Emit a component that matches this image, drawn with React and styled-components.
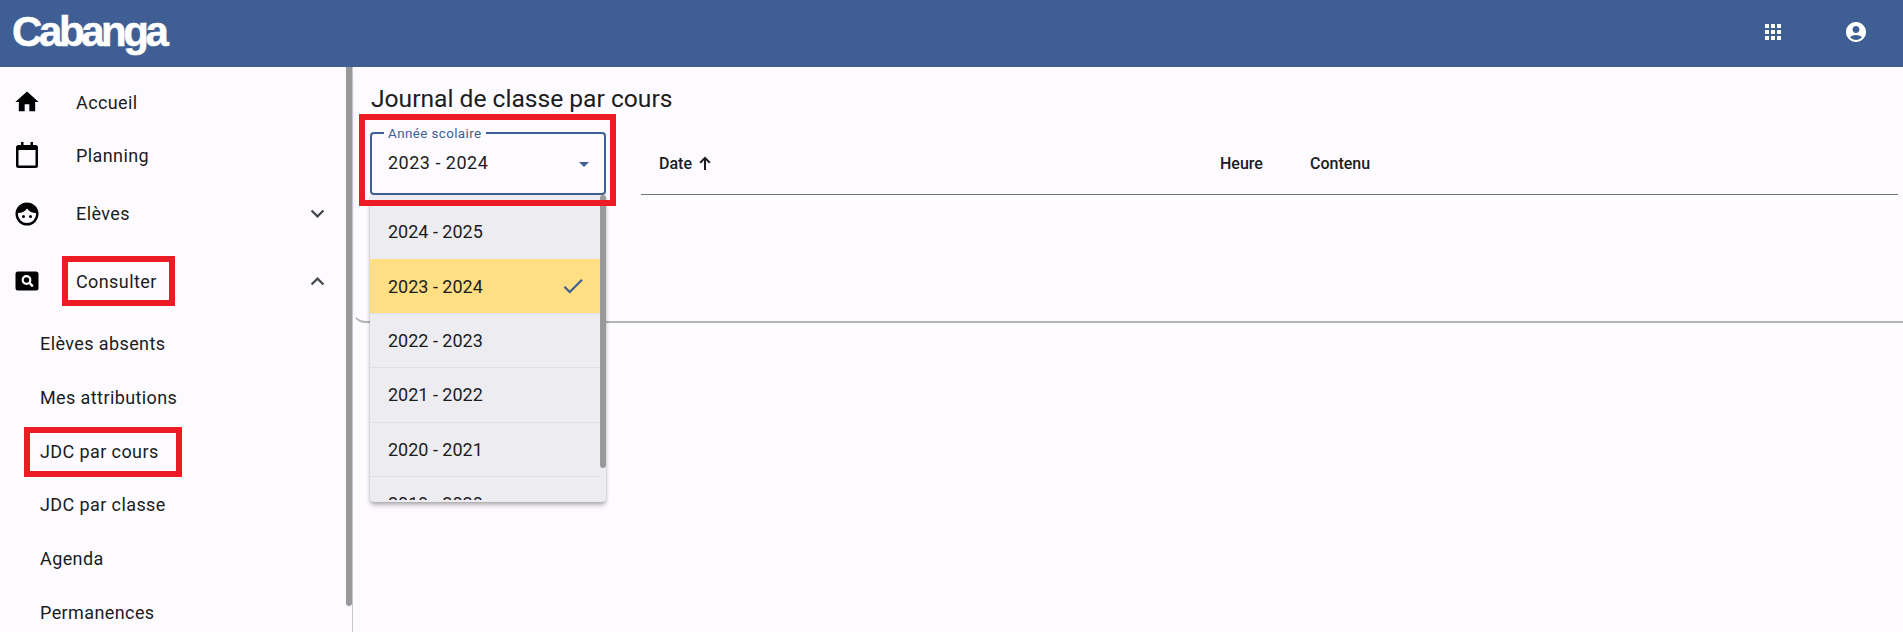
import React from "react";
import styled, { createGlobalStyle } from "styled-components";
import {
  MdHome,
  MdExpandMore,
  MdExpandLess,
  MdApps,
  MdAccountCircle,
  MdArrowDropDown,
  MdCheck,
} from "react-icons/md";

const years = ["2024 - 2025", "2023 - 2024", "2022 - 2023", "2021 - 2022", "2020 - 2021", "2019 - 2020"];
const subLinks = ["Elèves absents", "Mes attributions", "JDC par cours", "JDC par classe", "Agenda", "Permanences"];

function CalendarIcon() {
  return (
    <svg width="24" height="26" viewBox="0 0 24 26">
      <path d="M6 0h2.500v3h7V0H18v3h2.500A2.500 2.500 0 0 1 23 5.500v18a2.500 2.500 0 0 1-2.500 2.500h-17A2.500 2.500 0 0 1 1 23.500v-18A2.500 2.500 0 0 1 3.500 3H6z" fill="#000" />
      <rect x="3.500" y="8" width="17" height="15.500" fill="#fdfbff" />
    </svg>
  );
}

function FaceIcon() {
  return (
    <svg width="24" height="24" viewBox="0 0 24 24">
      <circle cx="12" cy="12" r="10.300" fill="none" stroke="#000" strokeWidth="2.400" />
      <path d="M3 11c3.500 0 7-1.500 9-4.500 2 3 5.500 4.500 9 4.500V6l-4-4H7L3 6z" fill="#000" />
      <circle cx="8.500" cy="14.500" r="1.500" fill="#000" />
      <circle cx="15.500" cy="14.500" r="1.500" fill="#000" />
    </svg>
  );
}

function SearchCardIcon() {
  return (
    <svg width="24" height="24" viewBox="0 0 24 24">
      <rect x="0.500" y="2.500" width="23" height="19" rx="2.500" fill="#000" />
      <circle cx="11.500" cy="11" r="3.800" fill="none" stroke="#fff" strokeWidth="2.200" />
      <path d="M14.200 13.700l3.600 3.600" stroke="#fff" strokeWidth="2.400" />
    </svg>
  );
}

function SortArrow() {
  return (
    <svg width="18" height="18" viewBox="0 0 18 18">
      <path d="M9 2.500L3.500 8l1.400 1.400L8 6.300V16h2V6.300l3.100 3.100L14.500 8z" fill="currentColor" />
    </svg>
  );
}

function App() {
  return (
    <>
      <GlobalStyle />
      <Page>
        <Toolbar>
          <Logo>Cabanga</Logo>
          <ToolbarIcons>
            <MdApps size={24} />
            <MdAccountCircle size={24} />
          </ToolbarIcons>
        </Toolbar>
        <Body>
          <Sidebar>
            <NavRow $height={52}>
              <NavIcon><MdHome size={28} /></NavIcon>
              <NavLabel>Accueil</NavLabel>
            </NavRow>
            <NavRow $height={54}>
              <NavIcon><CalendarIcon /></NavIcon>
              <NavLabel>Planning</NavLabel>
            </NavRow>
            <NavRow $height={63}>
              <NavIcon><FaceIcon /></NavIcon>
              <NavLabel>Elèves</NavLabel>
              <Chevron><MdExpandMore size={27} /></Chevron>
            </NavRow>
            <NavRow $height={72}>
              <NavIcon><SearchCardIcon /></NavIcon>
              <NavLabel>Consulter</NavLabel>
              <Chevron><MdExpandLess size={27} /></Chevron>
            </NavRow>
            {subLinks.map((link) => (
              <SubLink key={link}>{link}</SubLink>
            ))}
            <SideThumb />
            <Highlight $left={62} $top={189} $width={113} $height={50} />
            <Highlight $left={24} $top={360} $width={158} $height={50} />
          </Sidebar>
          <Main>
            <Card>
              <Title>Journal de classe par cours</Title>
              <CardRow>
                <SelectField>
                  <FieldLabel>Année scolaire</FieldLabel>
                  <FieldValue>2023 - 2024</FieldValue>
                  <ArrowSlot><MdArrowDropDown size={24} /></ArrowSlot>
                  <Highlight $left={-13} $top={-20} $width={257} $height={92} />
                  <Panel>
                    <PanelList>
                      {years.map((year, i) => (
                        <Option key={year} $selected={i === 1} $plain={i < 1}>
                          {year}
                          {i === 1 && <MdCheck size={26} />}
                        </Option>
                      ))}
                    </PanelList>
                    <PanelThumb />
                  </Panel>
                </SelectField>
                <Table>
                  <DateHead>Date <SortArrow /></DateHead>
                  <HourHead>Heure</HourHead>
                  <ContentHead>Contenu</ContentHead>
                </Table>
              </CardRow>
            </Card>
          </Main>
        </Body>
      </Page>
    </>
  );
}

const GlobalStyle = createGlobalStyle`
  html, body {
    margin: 0;
    height: 100%;
    overflow: hidden;
    background: #fdfbff;
    font-family: Roboto, "Liberation Sans", sans-serif;
    color: #1a1c1e;
  }
`;

const Page = styled.div`
  display: flex;
  flex-direction: column;
  width: 1903px;
  height: 632px;
  overflow: hidden;
`;

const Toolbar = styled.header`
  display: flex;
  align-items: center;
  justify-content: space-between;
  flex: 0 0 67px;
  padding: 0 35px 4px 12px;
  box-sizing: border-box;
  background: #3f5f94;
  color: #fff;
`;

const Logo = styled.div`
  font-family: "Liberation Sans", Arial, sans-serif;
  font-weight: 700;
  font-size: 42px;
  letter-spacing: -3.400px;
  -webkit-text-stroke: 0.5px #fff;
`;

const ToolbarIcons = styled.div`
  display: flex;
  align-items: center;
  gap: 59px;
`;

const Body = styled.div`
  display: flex;
  flex: 1;
  min-height: 0;
`;

const Sidebar = styled.nav`
  position: relative;
  flex: 0 0 353px;
  box-sizing: border-box;
  padding-top: 9px;
  border-right: 1px solid #c4c6cf;
`;

const NavRow = styled.div`
  display: flex;
  align-items: center;
  height: ${(p) => p.$height}px;
  padding: 0 21px 0 13px;
`;

const NavIcon = styled.span`
  display: flex;
  justify-content: center;
  width: 28px;
  margin-right: 35px;
  color: #000;
`;

const NavLabel = styled.span`
  flex: 1;
  font-size: 18px;
  letter-spacing: 0.4px;
`;

const Chevron = styled.span`
  display: flex;
  color: #43474e;
`;

const SubLink = styled.div`
  display: flex;
  align-items: center;
  height: 53.700px;
  padding-left: 40px;
  font-size: 18px;
  letter-spacing: 0.4px;
`;

const SideThumb = styled.div`
  position: absolute;
  top: 0;
  right: 0;
  width: 6px;
  height: 539px;
  border-radius: 0 0 3px 3px;
  background: #999;
`;

const Highlight = styled.div`
  position: absolute;
  left: ${(p) => p.$left}px;
  top: ${(p) => p.$top}px;
  width: ${(p) => p.$width}px;
  height: ${(p) => p.$height}px;
  box-sizing: border-box;
  border: 6px solid #ed1c24;
  pointer-events: none;
  z-index: 5;
`;

const Main = styled.main`
  flex: 1;
  min-width: 0;
`;

const Card = styled.section`
  box-sizing: border-box;
  height: 256px;
  padding: 16px 5px 0 16px;
  border-bottom: 2px solid #b4b4b8;
  border-left: 1px solid #f3f2f6;
  border-radius: 12px 0 0 12px;
`;

const Title = styled.h1`
  margin: 0 0 0 1px;
  height: 49px;
  font-size: 24.600px;
  line-height: 32px;
  font-weight: 400;
`;

const CardRow = styled.div`
  display: flex;
  align-items: flex-start;
`;

const SelectField = styled.div`
  position: relative;
  flex: 0 0 236px;
  box-sizing: border-box;
  height: 63px;
  padding: 17px 15px 0 16px;
  border: 2px solid #3f5f94;
  border-radius: 4px;
`;

const FieldLabel = styled.span`
  position: absolute;
  top: -8px;
  left: 12px;
  padding: 0 4px;
  background: #fdfbff;
  font-size: 13.400px;
  line-height: 16px;
  letter-spacing: 0.4px;
  color: #3f5f94;
`;

const FieldValue = styled.div`
  font-size: 18px;
  line-height: 24px;
  letter-spacing: 0.5px;
`;

const ArrowSlot = styled.span`
  position: absolute;
  right: 8px;
  top: 18px;
  display: flex;
  color: #3f5f94;
`;

const Panel = styled.div`
  position: absolute;
  top: 61px;
  left: -2px;
  width: 236px;
  height: 307px;
  overflow: hidden;
  border-radius: 0 0 4px 4px;
  background: #edecf0;
  box-shadow: 0 2px 4px -1px rgba(0, 0, 0, 0.3), 0 4px 5px rgba(0, 0, 0, 0.14);
  z-index: 3;
`;

const PanelList = styled.div`
  height: 305px;
  padding-top: 10px;
  box-sizing: border-box;
  overflow: hidden;
`;

const Option = styled.div`
  display: flex;
  align-items: center;
  justify-content: space-between;
  box-sizing: border-box;
  width: 230px;
  height: 54.400px;
  padding: 0 14px 0 18px;
  font-size: 18px;
  background: ${(p) => (p.$selected ? "#ffdf83" : "transparent")};
  border-bottom: 1px solid ${(p) => (p.$plain ? "transparent" : "#e0dfe3")};
  svg {
    color: #3f5f94;
  }
`;

const PanelThumb = styled.div`
  position: absolute;
  top: 0;
  right: 0;
  width: 6px;
  height: 273px;
  border-radius: 3px;
  background: #999;
`;

const Table = styled.div`
  display: flex;
  align-items: center;
  flex: 1;
  height: 62px;
  margin-left: 35px;
  border-bottom: 1px solid #74777f;
  font-size: 16px;
  font-weight: 500;
`;

const DateHead = styled.div`
  display: flex;
  align-items: center;
  gap: 4px;
  width: 579px;
  padding-left: 18px;
  box-sizing: border-box;
`;

const HourHead = styled.div`
  width: 90px;
`;

const ContentHead = styled.div``;

export default App;
